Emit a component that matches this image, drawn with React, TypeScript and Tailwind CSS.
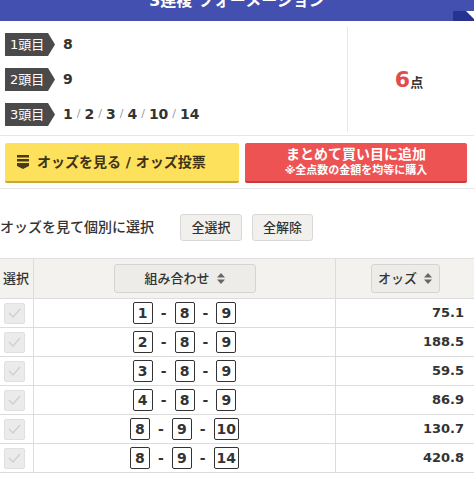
import React from "react";

const ROWS = [
  { nums: ["1", "8", "9"], odds: "75.1" },
  { nums: ["2", "8", "9"], odds: "188.5" },
  { nums: ["3", "8", "9"], odds: "59.5" },
  { nums: ["4", "8", "9"], odds: "86.9" },
  { nums: ["8", "9", "10"], odds: "130.7" },
  { nums: ["8", "9", "14"], odds: "420.8" },
];

function Tag({ label }: { label: string }) {
  return (
    <div className="w-[50px] h-[23px] bg-[#4a4a4a] text-white text-[13px] leading-none flex items-center pl-[5px] [clip-path:polygon(0_0,86%_0,100%_50%,86%_100%,0_100%)]">
      {label}
    </div>
  );
}

function SortIcon() {
  return (
    <svg width="8" height="11" viewBox="0 0 8 11" className="ml-[7px]">
      <path d="M4 0 L8 4.5 L0 4.5 Z" fill="#666" />
      <path d="M4 11 L8 6.5 L0 6.5 Z" fill="#666" />
    </svg>
  );
}

function NumBox({ n }: { n: string }) {
  return (
    <span className="min-w-[20px] h-[22px] px-[2px] border border-[#333] rounded-[2px] flex items-center justify-center text-[14px] font-bold text-[#333] bg-white">
      {n}
    </span>
  );
}

export default function App() {
  return (
    <div className="w-[474px] h-[480px] overflow-hidden bg-white text-[#333] font-['DejaVu_Sans','Noto_Sans_CJK_JP',sans-serif]">
      {/* header, scrolled partly out of view */}
      <div className="relative h-[40px] -mt-[19px] bg-[#4350b0] flex items-center justify-center text-white text-[16px] font-bold">
        3連複 フォーメーション
        <svg width="21" height="10" viewBox="0 0 21 10" className="absolute right-0 bottom-0">
          <rect width="21" height="10" fill="#27338e" />
          <path d="M13 0 L21 0 L21 8 Z" fill="#ffffff" />
        </svg>
      </div>

      {/* selected horses */}
      <div className="flex border-b border-[#e6e6e6] pt-[6px] pb-[3px]">
        <div className="w-[348px] border-r border-[#e8e8e8] pl-[5px]">
          <div className="h-[35px] flex items-center gap-[8px]">
            <Tag label="1頭目" />
            <span className="text-[14px] font-bold">8</span>
          </div>
          <div className="h-[35px] flex items-center gap-[8px]">
            <Tag label="2頭目" />
            <span className="text-[14px] font-bold">9</span>
          </div>
          <div className="h-[35px] flex items-center gap-[8px]">
            <Tag label="3頭目" />
            <span className="text-[14px] font-bold flex items-center">
              1<span className="mx-[4px] text-[11px] font-normal text-[#999]">/</span>
              2<span className="mx-[4px] text-[11px] font-normal text-[#999]">/</span>
              3<span className="mx-[4px] text-[11px] font-normal text-[#999]">/</span>
              4<span className="mx-[4px] text-[11px] font-normal text-[#999]">/</span>
              10<span className="mx-[4px] text-[11px] font-normal text-[#999]">/</span>
              14
            </span>
          </div>
        </div>
        <div className="flex-1 flex items-center justify-center pr-[4px]">
          <span className="text-[22px] font-bold text-[#e24b4b] leading-none">6</span>
          <span className="text-[13px] font-bold mt-[6px]">点</span>
        </div>
      </div>

      {/* action buttons */}
      <div className="flex gap-[6px] pl-[5px] pr-[7px] pt-[7px] pb-[5px] border-b border-[#e6e6e6]">
        <button className="flex-1 h-[40px] bg-[#fde05c] border-b-2 border-[#c9a73c] rounded-[2px] flex items-center pl-[12px] gap-[8px] text-[14px] font-bold text-[#3d3316]">
          <svg width="12" height="14" viewBox="0 0 12 14">
            <rect x="0" y="0" width="12" height="2.5" fill="#4a3b14" />
            <rect x="0" y="4" width="12" height="2.5" fill="#4a3b14" />
            <path d="M0 8 H12 V11 L6 14 L0 11 Z" fill="#4a3b14" />
          </svg>
          オッズを見る / オッズ投票
        </button>
        <button className="flex-1 h-[40px] bg-[#ee5353] border-b-2 border-[#c43d3d] rounded-[2px] flex flex-col items-center justify-center text-white font-bold leading-tight">
          <span className="text-[14px]">まとめて買い目に追加</span>
          <span className="text-[11px]">※全点数の金額を均等に購入</span>
        </button>
      </div>

      {/* individual select */}
      <div className="flex items-center pt-[25px] pb-[17px]">
        <span className="text-[14px] font-medium w-[180px]">オッズを見て個別に選択</span>
        <button className="w-[62px] h-[27px] bg-[#f1f0ec] border border-[#d8d8d8] rounded-[3px] text-[13px] font-medium">全選択</button>
        <button className="ml-[10px] w-[61px] h-[27px] bg-[#f1f0ec] border border-[#d8d8d8] rounded-[3px] text-[13px] font-medium">全解除</button>
      </div>

      {/* table */}
      <div className="border-t border-[#e0e0e0]">
        <div className="flex h-[40px] bg-[#f3f2ee] border-b border-[#dcdcdc]">
          <div className="w-[34px] border-r border-[#dcdcdc] flex items-center pl-[3px] text-[13px] font-medium">選択</div>
          <div className="w-[302px] border-r border-[#dcdcdc] flex items-center justify-center">
            <div className="w-[142px] h-[29px] bg-[#edece8] border border-[#d4d4d4] rounded-[3px] flex items-center justify-center text-[13px] font-medium">
              組み合わせ
              <SortIcon />
            </div>
          </div>
          <div className="flex-1 flex items-center justify-center">
            <div className="w-[69px] h-[29px] bg-[#edece8] border border-[#d4d4d4] rounded-[3px] flex items-center justify-center text-[13px] font-medium">
              オッズ
              <SortIcon />
            </div>
          </div>
        </div>
        {ROWS.map((r, i) => (
          <div key={i} className="flex h-[29px] border-b border-[#dcdcdc]">
            <div className="w-[34px] border-r border-[#dcdcdc] flex items-center pl-[4px]">
              <span className="w-[21px] h-[21px] bg-[#ebebeb] border border-[#e0e0e0] rounded-[2px] flex items-center justify-center">
                <svg width="13" height="10" viewBox="0 0 13 10">
                  <path d="M1 5 L5 9 L12 1" stroke="#cfcfcf" strokeWidth="1.3" fill="none" />
                </svg>
              </span>
            </div>
            <div className="w-[302px] border-r border-[#dcdcdc] flex items-center justify-center gap-[8px]">
              <NumBox n={r.nums[0]} />
              <span className="text-[14px] font-bold">-</span>
              <NumBox n={r.nums[1]} />
              <span className="text-[14px] font-bold">-</span>
              <NumBox n={r.nums[2]} />
            </div>
            <div className="flex-1 flex items-center justify-end pr-[10px] text-[13px] font-bold">{r.odds}</div>
          </div>
        ))}
      </div>
    </div>
  );
}
